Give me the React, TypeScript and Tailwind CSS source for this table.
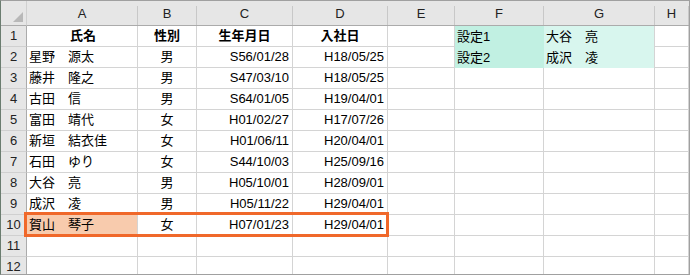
const cols = ["A", "B", "C", "D", "E", "F", "G", "H"];

type Row = { a?: string; b?: string; c?: string; d?: string; f?: string; g?: string; head?: boolean };

const rows: Row[] = [
  { a: "氏名", b: "性別", c: "生年月日", d: "入社日", f: "設定1", g: "大谷　亮", head: true },
  { a: "星野　源太", b: "男", c: "S56/01/28", d: "H18/05/25", f: "設定2", g: "成沢　凌" },
  { a: "藤井　隆之", b: "男", c: "S47/03/10", d: "H18/05/25" },
  { a: "古田　信", b: "男", c: "S64/01/05", d: "H19/04/01" },
  { a: "富田　靖代", b: "女", c: "H01/02/27", d: "H17/07/26" },
  { a: "新垣　結衣佳", b: "女", c: "H01/06/11", d: "H20/04/01" },
  { a: "石田　ゆり", b: "女", c: "S44/10/03", d: "H25/09/16" },
  { a: "大谷　亮", b: "男", c: "H05/10/01", d: "H28/09/01" },
  { a: "成沢　凌", b: "男", c: "H05/11/22", d: "H29/04/01" },
  { a: "賀山　琴子", b: "女", c: "H07/01/23", d: "H29/04/01" },
  {},
  {},
];

const cell = "h-[21px] border-r border-b border-[#d4d4d4] flex items-center overflow-hidden whitespace-nowrap";

export default function App() {
  return (
    <div
      className="relative w-[690px] h-[275px] overflow-hidden bg-white border border-[#a0a0a0] border-l-[#6b7d70] text-[13px] text-black"
      style={{ fontFamily: '"Liberation Sans", "Noto Sans CJK JP", sans-serif' }}
    >
      <div className="grid grid-cols-[26px_111px_59px_96px_95px_67px_89px_111px_1fr]">
        {/* Column headers */}
        <div className="h-[25px] bg-[#e6e6e6] border-r border-b border-r-[#d0d0d0] border-b-[#ababab] flex items-end justify-end pr-[3px] pb-[3px]">
          <svg width="10" height="10" viewBox="0 0 10 10">
            <polygon points="10,0 10,10 0,10" fill="#b8b8b8" />
          </svg>
        </div>
        {cols.map((c) => (
          <div key={c} className="h-[25px] bg-[#e6e6e6] border-b border-[#ababab] pt-[5px]">
            <div className="h-full border-r border-[#c8c8c8] flex items-center justify-center pb-[4px] text-[#222]">
              {c}
            </div>
          </div>
        ))}

        {rows.map((r, i) => {
          const n = i + 1;
          const fill = n <= 2;
          return (
            <div key={n} className="contents">
              <div className="h-[21px] bg-[#e6e6e6] border-r border-b border-r-[#ababab] border-b-[#d0d0d0] flex items-center justify-center text-[#222]">
                {n}
              </div>
              <div className={`${cell} pl-[2px] ${r.head ? "justify-center font-bold" : ""} ${n === 10 ? "bg-[#f8cbad]" : ""}`}>
                {r.a}
              </div>
              <div className={`${cell} justify-center ${r.head ? "font-bold" : ""}`}>{r.b}</div>
              <div className={`${cell} ${r.head ? "justify-center font-bold" : "justify-end pr-[3px]"}`}>{r.c}</div>
              <div className={`${cell} ${r.head ? "justify-center font-bold" : "justify-end pr-[3px]"}`}>{r.d}</div>
              <div className={cell} />
              <div className={fill ? "h-[21px] bg-[#c1f0e2] flex items-center pl-[2px] whitespace-nowrap" : `${cell} pl-[2px]`}>
                {r.f}
              </div>
              <div className={fill ? "h-[21px] bg-[#d8f6ee] border-r border-[#d4d4d4] flex items-center pl-[2px] whitespace-nowrap" : `${cell} pl-[2px]`}>
                {r.g}
              </div>
              <div className={cell} />
            </div>
          );
        })}
      </div>

      {/* active range border A10:D10 */}
      <div className="absolute left-[23px] top-[211px] w-[365px] h-[25px] border-[3px] border-[#f0682a] pointer-events-none" />
    </div>
  );
}
